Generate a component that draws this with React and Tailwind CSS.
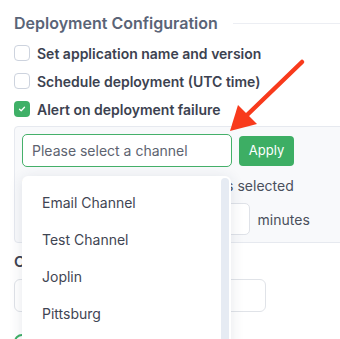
import React from "react";

const channels = ["Email Channel", "Test Channel", "Joplin", "Pittsburg", "Denver"];

function Checkbox({ checked, label }) {
	return (
		<label className="flex h-[28px] items-center gap-[7px]">
			{checked ? (
				<span className="flex h-[16px] w-[16px] items-center justify-center rounded-[4px] bg-[#3fb067]">
					<svg width="8" height="8" viewBox="0 0 8 8" fill="none">
						<path d="M1.5 4.2 3.2 5.8 6.5 2.3" stroke="white" strokeWidth="1.3" strokeLinecap="round" strokeLinejoin="round" />
					</svg>
				</span>
			) : (
				<span className="h-[16px] w-[16px] rounded-[4px] border border-[#cdd3de] bg-white" />
			)}
			<span className="text-[14px] font-semibold text-[#3c4250]">{label}</span>
		</label>
	);
}

export default function App() {
	return (
		<div className="relative h-[339px] w-[340px] overflow-hidden bg-white font-['Inter',sans-serif]">
			<div className="pl-[14px] pt-[11px]">
				{/* heading */}
				<div className="flex h-[24px] items-center gap-[15px]">
					<h2 className="whitespace-nowrap text-[16px] font-semibold text-[#5a6477]">
						Deployment Configuration
					</h2>
					<div className="h-px flex-1 bg-[#eceef3]" />
				</div>

				<div className="mt-[4px] flex flex-col">
					<Checkbox label="Set application name and version" />
					<Checkbox label="Schedule deployment (UTC time)" />
					<Checkbox checked label="Alert on deployment failure" />
				</div>

				{/* alert panel */}
				<div className="mt-[3px] w-[340px] rounded-l-[4px] border border-[#e6e9ef] bg-[#f8f9fb] px-[7px] pb-[7px] pt-[7px]">
					<div className="flex items-center gap-[7px]">
						<div className="relative">
							<input
								className="h-[33px] w-[210px] rounded-[5px] border border-[#45b06a] bg-white px-[9px] text-[14px] text-[#3c4250] outline-none placeholder:text-[#5d6370]"
								placeholder="Please select a channel"
							/>
							{/* dropdown */}
							<div className="absolute left-0 top-[42px] z-10 h-[200px] w-[209px] rounded-[6px] bg-white pt-[8px] shadow-[0_2px_14px_rgba(40,55,90,0.12)]">
								<div className="absolute right-[2px] top-[2px] h-[196px] w-[8px] rounded-full bg-[#e6ebf3]" />
								{channels.map((c) => (
									<div key={c} className="flex h-[37px] items-center pl-[20px] text-[14px] text-[#3f4553]">
										{c}
									</div>
								))}
							</div>
						</div>
						<button className="h-[30px] w-[55px] rounded-[4px] bg-[#3dae64] text-[13px] text-white">
							Apply
						</button>
					</div>
					<p className="mt-[9px] h-[20px] text-[14px] leading-[20px] text-[#4a505c]">
						Notification goes to all channels selected
					</p>
					<div className="mt-[7px] flex items-center gap-[8px]">
						<span className="text-[14px] text-[#4a505c]">Re-send alert after</span>
						<input className="h-[32px] w-[96px] rounded-[5px] border border-[#dfe2e8] bg-white" defaultValue="" />
						<span className="text-[14px] text-[#4a505c]">minutes</span>
					</div>
				</div>

				<h3 className="mt-[9px] h-[20px] text-[15px] font-semibold leading-[20px] text-[#3c4250]">
					Custom message
				</h3>
				<input className="mt-[7px] h-[33px] w-[252px] rounded-[6px] border border-[#e0e3e8] bg-white" />
				<div className="mt-[22px] flex items-center gap-[7px]">
					<span className="h-[16px] w-[16px] rounded-full border-2 border-[#3fb067]" />
					<span className="text-[14px] leading-[16px] text-[#3c4250]">Logs</span>
				</div>
			</div>

			{/* annotation arrow */}
			<svg className="pointer-events-none absolute left-0 top-0 z-20" width="340" height="339">
				<line x1="302" y1="62" x2="246" y2="116" stroke="#f83a1c" strokeWidth="4.5" strokeLinecap="round" />
				<polygon points="230,131 238,105 257,124" fill="#f83a1c" />
			</svg>
		</div>
	);
}
